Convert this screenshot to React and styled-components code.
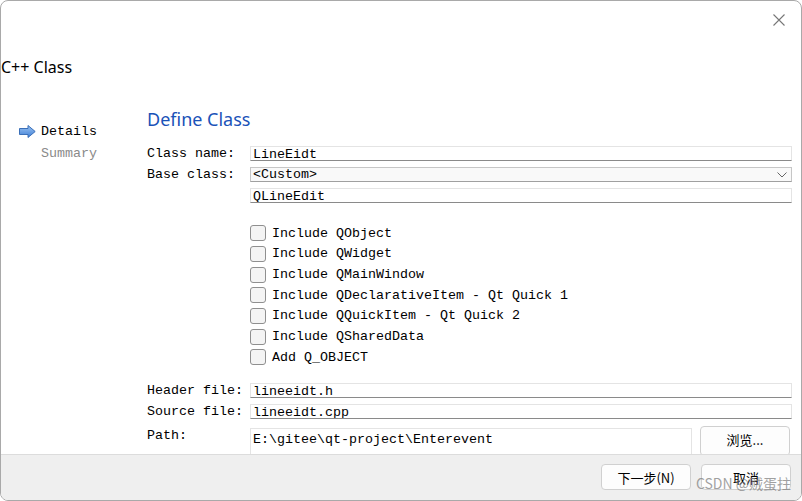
import styled, { createGlobalStyle } from "styled-components";

const GlobalStyle = createGlobalStyle`
    html, body {
        margin: 0;
        padding: 0;
        background: #ffffff;
    }
    * {
        box-sizing: border-box;
    }
`

const mono = `"Liberation Mono", "DejaVu Sans Mono", monospace`;
const cjk = `"Noto Sans CJK SC", "Noto Sans", sans-serif`;

const checks = [
    "Include QObject",
    "Include QWidget",
    "Include QMainWindow",
    "Include QDeclarativeItem - Qt Quick 1",
    "Include QQuickItem - Qt Quick 2",
    "Include QSharedData",
    "Add Q_OBJECT",
];

function Arrow() {
    return (
        <svg width="17" height="13" viewBox="0 0 17 13">
            <defs>
                <linearGradient id="arr" x1="0" y1="0" x2="0" y2="1">
                    <stop offset="0" stopColor="#9cc4f2"/>
                    <stop offset="1" stopColor="#3f7fd6"/>
                </linearGradient>
            </defs>
            <path d="M0.5 3.5 H9 V0.5 L16.2 6.5 L9 12.5 V9.5 H0.5 Z" fill="url(#arr)" stroke="#3a6fb8" strokeWidth="1"/>
        </svg>
    )
}

function Close() {
    return (
        <svg width="12" height="12" viewBox="0 0 12 12">
            <path d="M0.5 0.5 L11.5 11.5 M11.5 0.5 L0.5 11.5" stroke="#777" strokeWidth="1.1"/>
        </svg>
    )
}

function Chevron() {
    return (
        <svg width="10" height="6" viewBox="0 0 10 6">
            <path d="M0.5 0.5 L5 5 L9.5 0.5" fill="none" stroke="#666" strokeWidth="1"/>
        </svg>
    )
}

export default function App() {
    return (
        <>
            <GlobalStyle/>
            <Window>
                <TitleBar>
                    <CloseButton><Close/></CloseButton>
                </TitleBar>
                <Heading>C++ Class</Heading>
                <Body>
                    <Sidebar>
                        <Step active>
                            <Arrow/>
                            <span>Details</span>
                        </Step>
                        <Step>
                            <span>Summary</span>
                        </Step>
                    </Sidebar>
                    <Main>
                        <PageTitle>Define Class</PageTitle>
                        <Form>
                            <Label>Class name:</Label>
                            <Field>LineEidt</Field>
                            <Label>Base class:</Label>
                            <Combo>
                                <span>&lt;Custom&gt;</span>
                                <Chevron/>
                            </Combo>
                            <span/>
                            <Field>QLineEdit</Field>
                        </Form>
                        <Checks>
                            {checks.map((c) => (
                                <CheckRow key={c}>
                                    <Box/>
                                    <span>{c}</span>
                                </CheckRow>
                            ))}
                        </Checks>
                        <Form>
                            <Label>Header file:</Label>
                            <Field>lineeidt.h</Field>
                            <Label>Source file:</Label>
                            <Field>lineeidt.cpp</Field>
                        </Form>
                        <PathRow>
                            <Label>Path:</Label>
                            <PathField>E:\gitee\qt-project\Enterevent</PathField>
                            <Button small>浏览...</Button>
                        </PathRow>
                    </Main>
                </Body>
                <Footer>
                    <Button>下一步(N)</Button>
                    <Button>取消</Button>
                    <Watermark>CSDN @贼蛋拄</Watermark>
                </Footer>
            </Window>
        </>
    )
}

const Window = styled.div`
    position: relative;
    width: 802px;
    height: 501px;
    border: 1px solid #a9a9a9;
    border-radius: 8px;
    background: #ffffff;
    overflow: hidden;
    display: flex;
    flex-direction: column;
`

const TitleBar = styled.div`
    height: 40px;
    display: flex;
    justify-content: flex-end;
    align-items: flex-start;
    padding: 13px 16px 0 0;
    flex-shrink: 0;
`

const CloseButton = styled.div`
    width: 12px;
    height: 12px;
    display: flex;
`

const Heading = styled.div`
    font-family: "Noto Sans", "Open Sans", sans-serif;
    font-size: 16px;
    line-height: 20px;
    color: #000;
    margin-top: 16px;
    padding-left: 0;
    flex-shrink: 0;
`

const Body = styled.div`
    flex: 1;
    display: flex;
    overflow: hidden;
    padding-top: 27px;
`

const Sidebar = styled.div`
    width: 146px;
    flex-shrink: 0;
    padding: 17px 0 0 18px;
    display: flex;
    flex-direction: column;
    gap: 2px;
`

const Step = styled.div`
    display: flex;
    align-items: center;
    gap: 5px;
    height: 20px;
    padding-left: ${(p) => (p.active ? "0" : "22px")};
    font-family: ${mono};
    font-size: 13.33px;
    color: ${(p) => (p.active ? "#000" : "#8a8a8a")};
`

const Main = styled.div`
    flex: 1;
    padding-right: 9px;
    display: flex;
    flex-direction: column;
`

const PageTitle = styled.div`
    font-family: "Noto Sans", "Open Sans", sans-serif;
    font-size: 18px;
    line-height: 26px;
    color: #1a52b8;
    height: 42px;
    padding-top: 2px;
    flex-shrink: 0;
`

const Form = styled.div`
    display: grid;
    grid-template-columns: 103px 1fr;
    grid-auto-rows: 15px;
    row-gap: 6px;
    align-items: end;
    flex-shrink: 0;
`

const Label = styled.span`
    font-family: ${mono};
    font-size: 13.33px;
    line-height: 15px;
    color: #000;
    white-space: nowrap;
`

const Field = styled.div`
    height: 15px;
    border: 1px solid #e4e4e4;
    border-bottom-color: #8a8a8a;
    background: #fff;
    font-family: ${mono};
    font-size: 13.33px;
    line-height: 15px;
    padding-left: 2px;
    color: #000;
    overflow: hidden;
    white-space: nowrap;
`

const Combo = styled(Field)`
    display: flex;
    justify-content: space-between;
    align-items: center;
    background: #f9f9f9;
    border-color: #c6c6c6;
    border-bottom-color: #a0a0a0;
    padding-right: 4px;

    span {
        line-height: 13px;
    }
`

const Checks = styled.div`
    display: flex;
    flex-direction: column;
    padding: 20px 0 0 103px;
    margin-bottom: 15px;
    flex-shrink: 0;
`

const CheckRow = styled.div`
    display: flex;
    align-items: center;
    gap: 6px;
    height: 20.67px;
    font-family: ${mono};
    font-size: 13.33px;
    color: #000;
    white-space: nowrap;
`

const Box = styled.div`
    width: 16px;
    height: 16px;
    border: 1px solid #8f8f8f;
    border-radius: 3px;
    background: #f4f4f4;
    flex-shrink: 0;
`

const PathRow = styled.div`
    display: grid;
    grid-template-columns: 103px 1fr 90px;
    column-gap: 8px;
    margin-top: 9px;
    padding-right: 2px;
    align-items: start;
    flex-shrink: 0;
`

const PathField = styled.div`
    margin-left: -8px;
    height: 30px;
    border: 1px solid #e4e4e4;
    background: #fff;
    font-family: ${mono};
    font-size: 13.33px;
    padding: 3px 0 0 2px;
    color: #000;
    white-space: nowrap;
`

const Button = styled.div`
    width: 90px;
    height: ${(p) => (p.small ? "30px" : "26px")};
    margin-top: ${(p) => (p.small ? "-2px" : "0")};
    border: 1px solid #d0d0d0;
    border-radius: 4px;
    background: #fdfdfd;
    display: flex;
    justify-content: center;
    align-items: ${(p) => (p.small ? "flex-start" : "center")};
    padding-top: ${(p) => (p.small ? "3px" : "0")};
    font-family: ${cjk};
    font-size: 13px;
    color: #000;
`

const Footer = styled.div`
    position: relative;
    height: 46px;
    flex-shrink: 0;
    border-top: 1px solid #dcdcdc;
    background: #efefef;
    display: flex;
    justify-content: flex-end;
    align-items: flex-start;
    gap: 10px;
    padding: 9px 10px 0 0;
`

const Watermark = styled.div`
    position: absolute;
    right: 10px;
    bottom: 7px;
    font-family: ${cjk};
    font-size: 14px;
    color: rgba(130, 130, 130, 0.75);
    pointer-events: none;
`
